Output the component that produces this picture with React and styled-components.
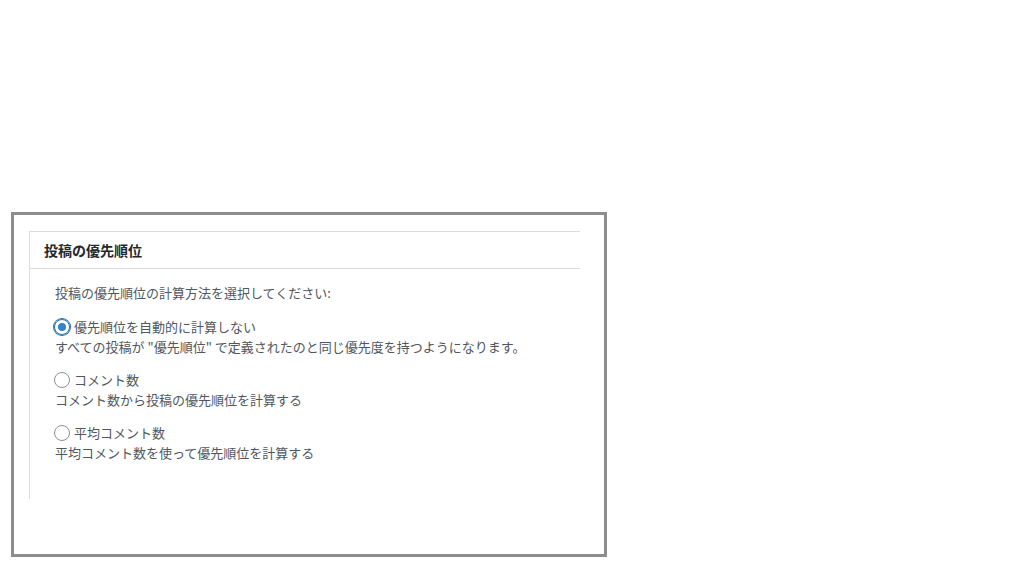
import React from "react";
import styled, { createGlobalStyle } from "styled-components";

const GlobalStyle = createGlobalStyle`
  html, body {
    margin: 0;
    padding: 0;
    background: #ffffff;
  }
  * {
    box-sizing: border-box;
  }
`;

const Page = styled.div`
  width: 1024px;
  height: 576px;
  padding: 212px 0 0 11px;
  font-family: "Noto Sans CJK JP", "Noto Sans", sans-serif;
`;

const Frame = styled.div`
  width: 596px;
  height: 345px;
  border: 3px solid #8d8d8d;
  padding: 16px 0 0 15px;
  background: #fff;
`;

const Panel = styled.section`
  width: 551px;
  height: 268px;
  border-top: 1px solid #dcdcde;
  border-left: 1px solid #dcdcde;
`;

const PanelHeader = styled.h2`
  margin: 0;
  height: 37px;
  padding: 0 0 0 14px;
  border-bottom: 1px solid #dcdcde;
  display: flex;
  align-items: center;
  font-size: 14px;
  font-weight: 700;
  color: #23282d;
`;

const PanelBody = styled.div`
  padding: 14px 0 0 25px;
  font-size: 13px;
  color: #50575e;
`;

const Intro = styled.p`
  margin: 0 0 14px;
  line-height: 20px;
`;

const Option = styled.div`
  margin-bottom: 14px;
`;

const OptionLabel = styled.label`
  display: flex;
  align-items: center;
  gap: 4px;
  line-height: 20px;
  margin-left: -1px;
`;

const Radio = styled.span`
  width: 16px;
  height: 16px;
  border-radius: 50%;
  border: 1px solid ${({ $checked }) => ($checked ? "#2271b1" : "#8c8f94")};
  box-shadow: ${({ $checked }) => ($checked ? "0 0 0 1px #2271b1" : "none")};
  display: flex;
  align-items: center;
  justify-content: center;
  flex-shrink: 0;

  &::after {
    content: "";
    display: ${({ $checked }) => ($checked ? "block" : "none")};
    width: 8px;
    height: 8px;
    border-radius: 50%;
    background: #3582c4;
  }
`;

const Description = styled.div`
  line-height: 19px;
`;

const options = [
  {
    label: "優先順位を自動的に計算しない",
    desc: "すべての投稿が \"優先順位\" で定義されたのと同じ優先度を持つようになります。",
    checked: true,
  },
  {
    label: "コメント数",
    desc: "コメント数から投稿の優先順位を計算する",
  },
  {
    label: "平均コメント数",
    desc: "平均コメント数を使って優先順位を計算する",
  },
];

const App = () => {
  return (
    <>
      <GlobalStyle />
      <Page>
        <Frame>
          <Panel>
            <PanelHeader>投稿の優先順位</PanelHeader>
            <PanelBody>
              <Intro>投稿の優先順位の計算方法を選択してください:</Intro>
              {options.map((o) => (
                <Option key={o.label}>
                  <OptionLabel>
                    <Radio $checked={o.checked} />
                    {o.label}
                  </OptionLabel>
                  <Description>{o.desc}</Description>
                </Option>
              ))}
            </PanelBody>
          </Panel>
        </Frame>
      </Page>
    </>
  );
};

export default App;
